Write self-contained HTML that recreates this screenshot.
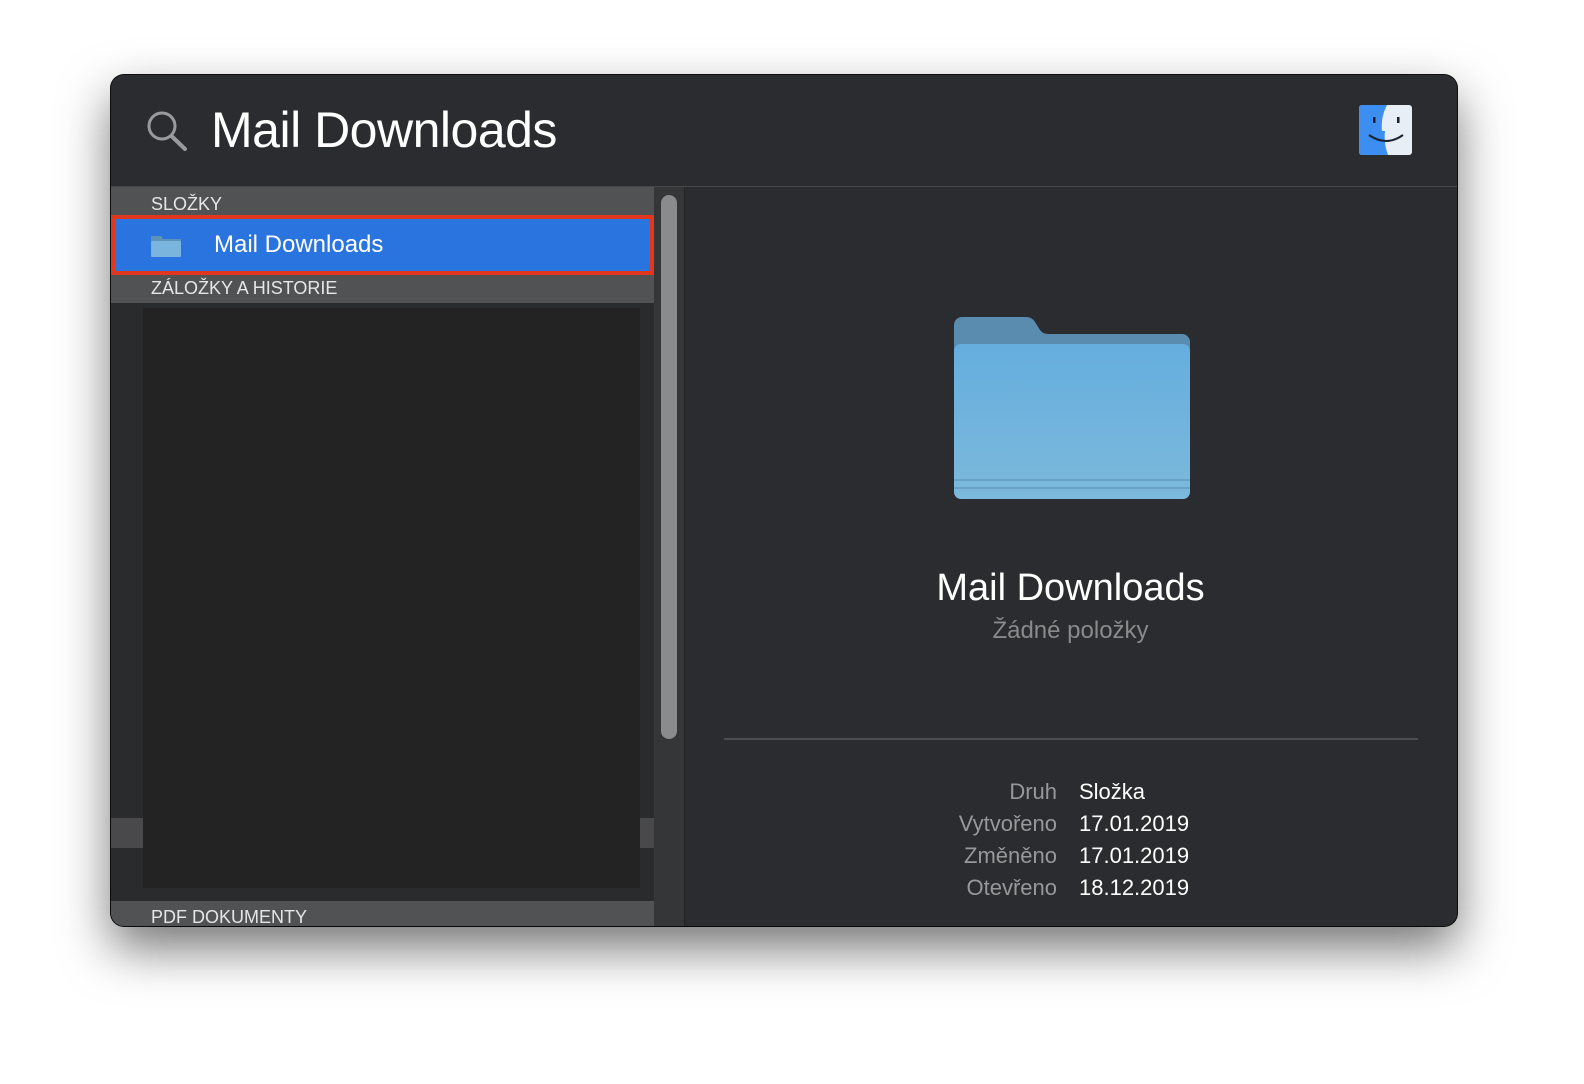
<!DOCTYPE html>
<html><head><meta charset="utf-8"><style>
body{margin:0;width:1584px;height:1084px;background:#fff;font-family:"Liberation Sans",sans-serif;position:relative;overflow:hidden}
.win{position:absolute;left:111px;top:75px;width:1346px;height:851px;background:#2b2c2f;border-radius:13px;box-shadow:0 22px 50px rgba(0,0,0,.55),0 0 0 1px #111;overflow:hidden}
.a{position:absolute}
.hdr{background:#515254;color:#e6e6e6;font-size:18px;padding-left:40px;box-sizing:border-box;left:0;width:543px}
.lbl{color:#98989a;text-align:right;width:200px;left:746px;font-size:22px}
.val{color:#fff;left:968px;font-size:22px}
</style></head><body>
<div class="win">
 <svg class="a" style="left:33px;top:34px" width="48" height="48" viewBox="0 0 48 48"><circle cx="18" cy="17" r="13" fill="none" stroke="#9a9a9c" stroke-width="3"/><line x1="27.5" y1="27" x2="41" y2="40" stroke="#9a9a9c" stroke-width="4" stroke-linecap="round"/></svg>
 <div class="a" style="left:100px;top:26px;font-size:50px;color:#fff;letter-spacing:-0.5px">Mail Downloads</div>
 <svg class="a" style="left:1248px;top:30px" width="53" height="50" viewBox="0 0 53 50"><rect width="53" height="50" rx="3" fill="#e8eef5"/><path d="M0 3a3 3 0 0 1 3-3h25c-4 8-6 16-5 26h3c-1 8 0 16 3 24H3a3 3 0 0 1-3-3z" fill="#3c8ff0"/><rect x="14" y="12" width="2.5" height="6" fill="#1a2030"/><rect x="38" y="12" width="2.5" height="6" fill="#1a2030"/><path d="M10 30q17 12 34 0" stroke="#1a2030" stroke-width="2" fill="none"/></svg>
 <div class="a" style="left:0;top:111px;width:1346px;height:1px;background:#46474a"></div>
 <div class="a" style="left:0;top:112px;width:543px;height:740px;background:#2a2b2d"></div>
 <div class="a hdr" style="top:112px;height:30px;line-height:34px">SLOŽKY</div>
 <div class="a" style="left:0;top:140px;width:543px;height:60px;background:#e2371f"></div>
 <div class="a" style="left:4px;top:144px;width:535px;height:52px;background:#2a74e0"></div>
 <svg class="a" style="left:39px;top:159px" width="32" height="24" viewBox="0 0 32 24"><path d="M1 2h10l2 3h18v18H1z" fill="#5e93b8"/><rect x="1" y="7" width="30" height="16" rx="1.5" fill="#7ab5dd"/></svg>
 <div class="a" style="left:103px;top:156px;font-size:24px;color:#fff">Mail Downloads</div>
 <div class="a hdr" style="top:200px;height:28px;line-height:26px">ZÁLOŽKY A HISTORIE</div>
 <div class="a" style="left:0;top:743px;width:543px;height:30px;background:#49494b"></div>
 <div class="a" style="left:32px;top:233px;width:497px;height:580px;background:#232323"></div>
 <div class="a hdr" style="top:826px;height:26px;line-height:32px">PDF DOKUMENTY</div>
 <div class="a" style="left:543px;top:112px;width:30px;height:740px;background:#353638;border-right:1px solid #232426"></div>
 <div class="a" style="left:550px;top:120px;width:16px;height:544px;border-radius:8px;background:#8a8b8d"></div>
 <svg class="a" style="left:843px;top:240px" width="236" height="186" viewBox="0 0 236 186"><defs><linearGradient id="g" x1="0" y1="0" x2="0" y2="1"><stop offset="0" stop-color="#65aede"/><stop offset="1" stop-color="#7cb9dc"/></linearGradient></defs><path d="M0 10a8 8 0 0 1 8-8h64q6 0 9 5l5 8q3 4 8 4h134a8 8 0 0 1 8 8v150H0z" fill="#5a8caf"/><rect x="0" y="29" width="236" height="155" rx="7" fill="url(#g)"/><rect x="0" y="164" width="236" height="2" fill="#6aa2c6"/><rect x="0" y="172" width="236" height="2" fill="#6aa2c6"/></svg>
 <div class="a" style="left:573px;top:492px;width:773px;text-align:center;font-size:38px;color:#fff">Mail Downloads</div>
 <div class="a" style="left:573px;top:542px;width:773px;text-align:center;font-size:24px;color:#8a8a8c">Žádné položky</div>
 <div class="a" style="left:613px;top:663px;width:694px;height:2px;background:#4c4d50"></div>
 <div class="a lbl" style="top:704px">Druh</div><div class="a val" style="top:704px">Složka</div>
 <div class="a lbl" style="top:736px">Vytvořeno</div><div class="a val" style="top:736px">17.01.2019</div>
 <div class="a lbl" style="top:768px">Změněno</div><div class="a val" style="top:768px">17.01.2019</div>
 <div class="a lbl" style="top:800px">Otevřeno</div><div class="a val" style="top:800px">18.12.2019</div>
</div>
</body></html>
